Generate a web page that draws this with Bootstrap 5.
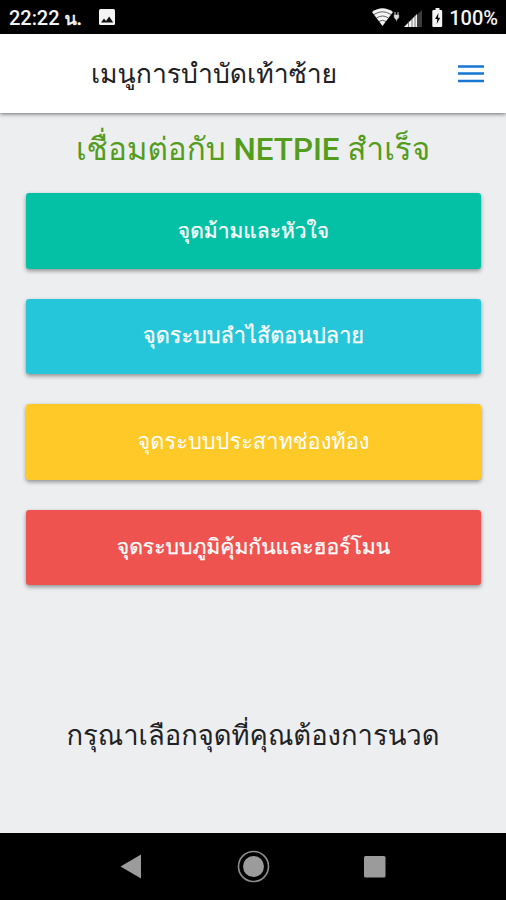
<!DOCTYPE html>
<html lang="th">
<head>
<meta charset="utf-8">
<meta name="viewport" content="width=device-width, initial-scale=1">
<title>เมนูการบำบัดเท้าซ้าย</title>
<link href="https://cdn.jsdelivr.net/npm/bootstrap@5.3.0/dist/css/bootstrap.min.css" rel="stylesheet">
<style>
body{font-family:Roboto,Loma,sans-serif;background:#edeef0;height:900px;overflow:hidden;color:#202124}
svg{display:block;flex:none}
.status-strip{height:34px;padding:2px 8px 0 9px;font-size:20px;font-weight:500;line-height:32px;color:#f4f4f4;background:#000}
.clock-text{width:88px;white-space:nowrap;letter-spacing:-.05px}
.thai-unit{font-size:18px;-webkit-text-stroke:.6px #f4f4f4}
.app-header{height:79px;padding:0 22px 0 91px;background:#fff;box-shadow:0 1px 4px rgba(0,0,0,.55);z-index:1}
.page-title{font-size:26.6px;line-height:40px;font-weight:400}
.connected{font-size:31.4px;line-height:44px;font-weight:500;color:#549c1b;margin-top:15px;white-space:nowrap}
.menu-stack{padding:21px 25px 0 26px;gap:30px}
.menu-btn{height:75.5px;border:0;border-radius:3px;color:#fff;font-size:21px;font-weight:500;line-height:30px;box-shadow:0 2px 4px rgba(0,0,0,.4);white-space:nowrap;-webkit-text-stroke:.25px #fff}
.menu-btn:hover{color:#fff}
.spleen{background:#04c1a6}
.colon{background:#26c6da;font-size:21.7px}
.belly{background:#ffca28;font-size:21.8px;-webkit-text-stroke-width:0}
.immune{background:#ef5350;font-size:21.15px}
.prompt-text{font-size:27.4px;line-height:42px;margin-top:130px;white-space:nowrap}
.system-nav{height:67px;background:#000}
</style>
</head>
<body class="d-flex flex-column">
<div class="status-strip d-flex align-items-center">
  <span class="clock-text">22:22 <span class="thai-unit">น.</span></span>
  <svg width="20" height="18" viewBox="0 0 20 18"><rect x="2" y="0" width="16" height="16" rx="1.5" fill="#f4f4f4"/><path d="M4 13.500l3-4 2 2.400 3.200-4.400 4 6z" fill="#111"/></svg>
  <div class="d-flex ms-auto align-items-center">
    <svg width="78" height="22" viewBox="0 0 78 22">
      <path d="M1 5Q11.500-2.500 22 5L11.500 19Z" fill="#f4f4f4"/>
      <path d="M3 7.500Q11.500 2 20 7.500M5.500 11Q11.500 7 17.500 11M8 14.500Q11.500 12 15 14.500" fill="none" stroke="#222" stroke-width=".7"/>
      <path d="M24 5v3M27 5v3" stroke="#ccc" stroke-width="1"/><path d="M23.200 8h4.600v2.500L25.500 13l-2.300-2.500zM25.500 12v2.500" fill="#ddd" stroke="#ddd" stroke-width=".5"/>
      <path d="M33 20L51 3v17z" fill="#3c3c3c"/><path d="M33 20L46 7v13z" fill="#f4f4f4"/>
      <path d="M37.500 14v6M41 11v9M44 8v12" stroke="#444" stroke-width=".7"/>
      <path d="M64.500 1h4v2H70q1.200 0 1.200 1.200v14.600Q71.200 20 70 20h-7.500q-1.200 0-1.200-1.200V4.200Q61.300 3 62.500 3h2z" fill="#f4f4f4"/>
      <path d="M67.500 6L64 12h2.300l-.6 5 3.500-6.200H67z" fill="#000"/>
    </svg>
    <span>100%</span>
  </div>
</div>
<header class="app-header d-flex align-items-center justify-content-between">
  <h1 class="page-title mb-0">เมนูการบำบัดเท้าซ้าย</h1>
  <svg width="26" height="20" viewBox="0 0 26 20"><path d="M0 2.500h26M0 9.500h26M0 17h26" stroke="#1976d2" stroke-width="2.400"/></svg>
</header>
<main class="flex-grow-1 d-flex flex-column">
  <h2 class="connected text-center mb-0">เชื่อมต่อกับ NETPIE สำเร็จ</h2>
  <div class="menu-stack d-flex flex-column">
    <button class="btn menu-btn spleen">จุดม้ามและหัวใจ</button>
    <button class="btn menu-btn colon">จุดระบบลำไส้ตอนปลาย</button>
    <button class="btn menu-btn belly">จุดระบบประสาทช่องท้อง</button>
    <button class="btn menu-btn immune">จุดระบบภูมิคุ้มกันและฮอร์โมน</button>
  </div>
  <p class="prompt-text text-center mb-0">กรุณาเลือกจุดที่คุณต้องการนวด</p>
</main>
<nav class="system-nav d-flex justify-content-center">
  <svg width="506" height="67" viewBox="0 0 506 67">
    <path d="M120.500 33.500L141 21.500v24z" fill="#9b9b9b"/>
    <circle cx="253.500" cy="33.500" r="15" fill="none" stroke="#8d8d8d" stroke-width="1.600"/><circle cx="253.500" cy="33.500" r="10.500" fill="#9b9b9b"/>
    <rect x="364" y="23" width="21.500" height="21.500" rx="1.500" fill="#9b9b9b"/>
  </svg>
</nav>
<script src="https://cdn.jsdelivr.net/npm/bootstrap@5.3.0/dist/js/bootstrap.bundle.min.js"></script>
</body>
</html>
